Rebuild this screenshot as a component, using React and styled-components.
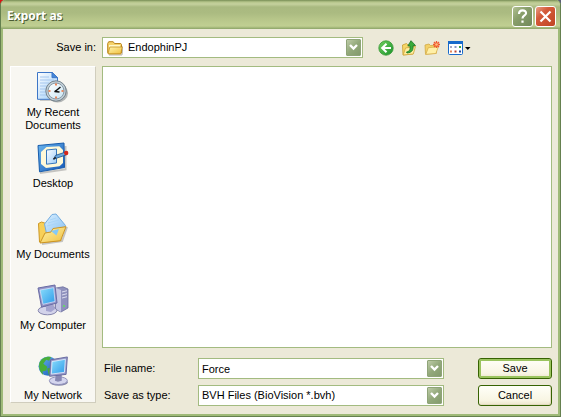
import React from "react";
import styled, { createGlobalStyle } from "styled-components";

const GlobalStyle = createGlobalStyle`
  * { box-sizing: border-box; }
  body { margin: 0; background: linear-gradient(90deg, #e01010 5px, #5c5f78 6px); }
  body, button, input, select {
    font-family: "Liberation Sans", Arial, sans-serif;
    font-size: 11px;
    line-height: 13px;
    color: #000;
  }
`;

const Window = styled.main`
  display: flex;
  flex-direction: column;
  min-height: 100vh;
  background: #ece9d8;
  border: solid #65804f;
  border-width: 0 1px 1px;
  border-radius: 5px 5px 0 0;
  box-shadow: inset 2px 0 #9fba78, inset -2px 0 #9fba78, inset 0 -2px #9fba78;
`;

const TitleBar = styled.header`
  display: flex;
  align-items: center;
  gap: 2px;
  height: 29px;
  padding: 3px 4px 0 6px;
  border-radius: 5px 5px 0 0;
  background: linear-gradient(#778d55 0, #b6c58b 2px, #c5d19e 4px, #a9b980 7px, #abbb81 13px, #b8c78b 20px, #c0cf92 26px, #8ca467 29px);
`;

const Title = styled.h1`
  flex: 1;
  margin: 0;
  font: bold 12px/16px "Noto Sans", sans-serif;
  color: #fff;
  text-shadow: 1px 1px #4b5c33;
`;

const CaptionButton = styled.button`
  display: flex;
  width: 21px;
  height: 21px;
  padding: 0;
  border: 1px solid #fff;
  border-radius: 3px;
  background: ${(p) =>
    p.$danger
      ? "linear-gradient(135deg, #e8a086, #d45a3a 35%, #c04524)"
      : "linear-gradient(135deg, #b2c193, #899f6b 40%, #71885a)"};
`;

const Body = styled.form`
  flex: 1;
  display: flex;
  flex-direction: column;
  gap: 8px;
  padding: 8px 8px 10px 9px;
`;

const LocationRow = styled.div`
  display: flex;
  align-items: center;
`;

const LocationLabel = styled.label`
  width: 86px;
  margin-right: 6px;
  text-align: right;
`;

const Combo = styled.div`
  display: flex;
  align-items: center;
  flex: ${(p) => (p.$location ? "0 1 261px" : "1")};
  min-width: 0;
  height: 21px;
  padding: 1px;
  border: 1px solid #a3bb80;
  background: #fff;
  position: relative;
`;

const FolderSlot = styled.span`
  display: flex;
  position: absolute;
  left: 4px;
  pointer-events: none;
`;

const ComboSelect = styled.select`
  appearance: none;
  flex: 1;
  min-width: 0;
  height: 17px;
  margin: 0;
  padding: 0 18px 0 ${(p) => (p.$icon ? "24px" : "2px")};
  border: 0;
  outline: 0;
  background: transparent;
`;

const ComboInput = styled.input`
  flex: 1;
  min-width: 0;
  height: 17px;
  margin: 0;
  padding: 0 18px 0 2px;
  border: 0;
  outline: 0;
  background: transparent;
`;

const ArrowFace = styled.span`
  display: flex;
  position: absolute;
  right: 1px;
  width: 15px;
  height: 17px;
  border: 1px solid #8fa478;
  border-radius: 1px;
  background: linear-gradient(135deg, #bdcba7, #93a97b 50%, #849b6d);
  pointer-events: none;
`;

const ToolBar = styled.div`
  display: flex;
  gap: 7px;
  margin-left: 15px;
`;

const ToolButton = styled.button`
  display: flex;
  padding: 0;
  border: 0;
  background: none;
`;

const Main = styled.div`
  flex: 1;
  display: flex;
  gap: 6px;
`;

const Places = styled.nav`
  width: 86px;
  margin-bottom: 3px;
  padding-top: 4px;
  border: 1px solid #fff;
  border-right-color: #d0cdbd;
  border-bottom-color: #d0cdbd;
  background: #f8f7f2;
`;

const Place = styled.button`
  display: flex;
  flex-direction: column;
  align-items: center;
  gap: 3px;
  width: 100%;
  height: 71px;
  padding: 0;
  border: 0;
  background: none;
  &:last-child { height: 47px; }
`;

const Content = styled.div`
  flex: 1;
  min-width: 0;
  display: flex;
  flex-direction: column;
  gap: 10px;
`;

const FileList = styled.div`
  flex: 1;
  border: 1px solid #a3bb80;
  background: #fff;
`;

const Fields = styled.div`
  display: flex;
  flex-direction: column;
  gap: 6px;
`;

const FieldRow = styled.div`
  display: flex;
  align-items: center;
`;

const FieldLabel = styled.label`
  width: 96px;
  padding-left: 2px;
`;

const ActionButton = styled.button`
  width: 74px;
  height: 21px;
  margin-left: 34px;
  padding: 0;
  border: 1px solid #376302;
  border-radius: 3px;
  background: linear-gradient(#fffff8, #f8f5e3 75%, #ece5cb);
  box-shadow: ${(p) => (p.$primary ? "inset 0 0 0 2px #9bc45f" : "inset -1px -1px #e3dbc0")};
`;

const Icon = ({ size = 16, children }) => (
  <svg width={size} height={size} viewBox={`0 0 ${size} ${size}`} aria-hidden="true">
    {children}
  </svg>
);

const gradients = [
  ["folderFace", "#fff5b0", "#f0bf3c"],
  ["greenBall", "#72cf5e", "#19932b"],
  ["paper", "#ffffff", "#9bccf8"],
  ["clockFace", "#ffffff", "#c9e5f3"],
  ["blueDeep", "#69b5ee", "#1557b6"],
  ["paperBlue", "#d9efff", "#82bdf2"],
  ["screen", "#8bddfb", "#2e9be9"],
];

const GradientDefs = () => (
  <defs>
    {gradients.map(([id, from, to]) => (
      <linearGradient key={id} id={id} x1="0" y1="0" x2="1" y2="1">
        <stop stopColor={from} />
        <stop offset="1" stopColor={to} />
      </linearGradient>
    ))}
  </defs>
);

const Arrow = () => (
  <ArrowFace>
    <svg width="13" height="15" viewBox="0 0 13 15" aria-hidden="true">
      <path d="M3 5l3.5 3.5L10 5" fill="none" stroke="#fff" strokeWidth="2.4" />
    </svg>
  </ArrowFace>
);

const Folder = () => (
  <Icon>
    <GradientDefs />
    <path d="M2 15h13l1-9" fill="none" stroke="#8d8774" opacity=".6" />
    <path d="M.7 3.5l1-1.8h4.5l1.3 1.8h6.3l.7 1V13l-1 .8H1.7l-1-1z" fill="#f6d36c" stroke="#b9851f" />
    <path d="M2 5h11v3H2z" fill="#fff9c8" />
    <path d="M1 13.800l1.800-6.800h12.500L13.800 13.800z" fill="url(#folderFace)" stroke="#c48f20" strokeWidth=".8" />
  </Icon>
);

const Back = () => (
  <Icon>
    <circle cx="8" cy="8" r="7.2" fill="url(#greenBall)" stroke="#359733" strokeWidth=".8" />
    <path d="M8.5 3.8L4.2 8l4.3 4.2M4.5 8H13" fill="none" stroke="#fff" strokeWidth="2.1" />
  </Icon>
);

const UpFolder = () => (
  <Icon>
    <path d="M2 15L1.5 5l4-1.5L7 5l6-.5-1 9.500z" fill="#f6d668" stroke="#c99c2e" strokeWidth=".8" />
    <path d="M2.2 15L4.5 8 14.5 6.500l-2.2 7.500z" fill="#ffee9f" stroke="#d1a63e" strokeWidth=".8" />
    <path d="M5.5 12c4-.7 3.7-3.5 3.4-6.2L6.8 6 10 .7l4.500 4.800-2.500.2c.4 4-.5 6.8-6 7.3z" fill="#39ab3b" stroke="#187426" strokeWidth=".8" />
  </Icon>
);

const NewFolder = () => (
  <Icon>
    <path d="M1.5 14.3L1 5l4-1 1.5 1.5 5.5-.3.5 8z" fill="#f3d168" stroke="#d0a842" strokeWidth=".8" />
    <path d="M1.8 14.3L4.3 7.7l10-.9-2.4 6.7z" fill="#fff0a7" stroke="#d8b04c" strokeWidth=".8" />
    <path d="M12.5 1v7M9 4.5h7M10 2l5 5M15 2l-5 5" stroke="#f0582f" strokeWidth="1.3" />
    <circle cx="12.5" cy="4.5" r="1.3" fill="#ffbe7a" />
  </Icon>
);

const Views = () => (
  <svg width="24" height="16" viewBox="0 0 24 16" aria-hidden="true">
    <rect x="1.5" y="1.5" width="14" height="13" rx="1" fill="#fff" stroke="#176acb" />
    <path d="M1 1h15v3H1z" fill="#176acb" />
    <path d="M3 6h2v2H3z" fill="#a9a9c4" />
    <path d="M7.5 6h2v2h-2z" fill="#8797c8" />
    <path d="M12 6h2v2h-2z" fill="#40a43d" />
    <path d="M3 10.5h2v2H3z" fill="#e38459" />
    <path d="M7.5 10.5h2v2h-2z" fill="#b74232" />
    <path d="M12 10.5h2v2h-2z" fill="#23459b" />
    <path d="M18 7h5.5l-2.7 3z" fill="#000" />
  </svg>
);

const RecentDocs = () => (
  <Icon size={32}>
    <path d="M3 29h20" stroke="#888" opacity=".4" strokeWidth="2" />
    <path d="M.5 1.5h14.800l5.2 5v21.8H.5z" fill="url(#paper)" stroke="#3d76c7" />
    <path d="M15 1.5v5.2h5.5z" fill="#4388dc" stroke="#3d76c7" />
    <path d="M3 6h9M3 9h14M3 12h9M3 15h7M3 18h6M3 21h6M3 24h7" stroke="#a5c6ee" />
    <ellipse cx="20.500" cy="22" rx="10.500" ry="9.4" fill="#777d82" opacity=".55" />
    <circle cx="19" cy="20" r="10.200" fill="#c3d0d8" stroke="#74828c" />
    <circle cx="19" cy="20" r="8" fill="url(#clockFace)" stroke="#899ba8" />
    <path d="M19 12.500v2M19 25.500v2M11.500 20h2M24.500 20h2" stroke="#ef6b32" strokeWidth="1.6" />
    <path d="M17.500 21l6-5M17.500 20.5l5 .5" stroke="#111" strokeWidth="1.5" />
  </Icon>
);

const Desktop = () => (
  <Icon size={32}>
    <path d="M3 31L28.500 27.500V4" fill="none" stroke="#777" strokeWidth="2" opacity=".4" />
    <path d="M1 3.500L27 1l.500 24.500L2.5 29.800z" fill="url(#blueDeep)" stroke="#175cac" />
    <path d="M9.5 5l12.8-.7L26 8v13l-3.5 3.2L9 26l-5-4V10z" fill="#fff9d8" />
    <path d="M9.5 8l10-1v14l-10 1.2z" fill="url(#paper)" stroke="#3878bc" />
    <path d="M16.5 17.2l2-3.8 9.8-3.3 1 2.8-9.5 3.2z" fill="#69a9e0" stroke="#1d4e86" strokeWidth=".8" />
    <path d="M16.5 17.3l2.2-2" stroke="#222" strokeWidth="1.5" />
    <circle cx="29.2" cy="11" r="2.200" fill="#d72819" />
  </Icon>
);

const Documents = () => (
  <Icon size={32}>
    <path d="M5 31l20-3 5-14" fill="none" stroke="#777" strokeWidth="2" opacity=".4" />
    <path d="M2.5 29L1.500 10.500l3-1.500 4.500 1.500 2 3 10-1 3 15-19 2z" fill="#f8d058" stroke="#cd9825" />
    <path d="M7.500 11L15 1.500l4-.500 9.500 11.500L22.5 24 10 23z" fill="url(#paperBlue)" stroke="#74ade0" />
    <path d="M13 7l6-2M11 10l11-3M10 13l14-3.500" stroke="#a9d5f8" />
    <path d="M3 30L8 20l6-1 2-3.5 13-1.8-5.5 14z" fill="url(#folderFace)" stroke="#cc9423" />
    <path d="M14 18l8-2-2.500 6.500z" fill="#83c9f7" />
  </Icon>
);

const Computer = () => (
  <Icon size={32}>
    <path d="M19 4l7-1.2L31 5v19l-7 4-6-3z" fill="#8f91bd" stroke="#6b6d9d" strokeWidth=".8" />
    <path d="M19 4l5 2v22l-5-3z" fill="#c4c5e2" />
    <path d="M25 8l5-1.3M25 11l5-1.3M25 14l5-1.3" stroke="#dddef0" />
    <path d="M26 22h2" stroke="#69d36f" strokeWidth="2" />
    <ellipse cx="10.5" cy="26.5" rx="9.3" ry="4.3" fill="#d3d3ea" stroke="#8585ad" />
    <path d="M9 21l7-2 2 6-4 3-5-1z" fill="#a4a4cf" />
    <path d="M1 4l17-3 2 18L4.5 23z" fill="#9293c6" stroke="#6a6ca5" />
    <path d="M3 6l13.7-2.4L18 17.5 6 20.3z" fill="url(#screen)" stroke="#e0e5fa" strokeWidth=".7" />
  </Icon>
);

const Network = () => (
  <Icon size={32}>
    <circle cx="11" cy="11.5" r="10" fill="url(#blueDeep)" />
    <path d="M2 8c2-5 8-7 12-6l-2 4-3-1-3 4 4 3-1 4-4 1 1 4C2 17 1 12 2 8M10 14l4-1 2 4-4 5z" fill="#49af38" />
    <ellipse cx="22" cy="28" rx="9.2" ry="3.8" fill="#8788aa" />
    <ellipse cx="21.5" cy="26.5" rx="9.3" ry="4" fill="#d4d5ee" stroke="#9091bb" />
    <path d="M19 20l6-.5v7l-4 1-3-1z" fill="#8687b2" />
    <path d="M13.5 5L30.8 2l-1.3 18-17 2z" fill="#9798c8" stroke="#676aa0" />
    <path d="M15 6.8L28.8 4.4l-1 13.5-13.5 1.8z" fill="url(#screen)" stroke="#eaf3ff" strokeWidth=".8" />
  </Icon>
);

const places = [
  ["My Recent Documents", RecentDocs],
  ["Desktop", Desktop],
  ["My Documents", Documents],
  ["My Computer", Computer],
  ["My Network", Network],
];

export default function App() {
  return (
    <Window>
      <GlobalStyle />
      <TitleBar>
        <Title>Export as</Title>
        <CaptionButton type="button" aria-label="Help">
          <Icon size={19}>
            <path d="M6 7c0-5 7.5-4.5 7-.5-.2 2-3.500 2-3.500 5M9.5 13.5v2.3" fill="none" stroke="#fff" strokeWidth="2.2" />
          </Icon>
        </CaptionButton>
        <CaptionButton type="button" $danger aria-label="Close">
          <Icon size={19}>
            <path d="M4.5 4.5l10 10M14.5 4.5l-10 10" stroke="#fff" strokeWidth="2.2" />
          </Icon>
        </CaptionButton>
      </TitleBar>
      <Body onSubmit={(e) => e.preventDefault()}>
        <LocationRow>
          <LocationLabel htmlFor="location">Save in:</LocationLabel>
          <Combo $location>
            <FolderSlot><Folder /></FolderSlot>
            <ComboSelect id="location" $icon>
              <option>EndophinPJ</option>
            </ComboSelect>
            <Arrow />
          </Combo>
          <ToolBar>
            <ToolButton type="button" aria-label="Back"><Back /></ToolButton>
            <ToolButton type="button" aria-label="Up one level"><UpFolder /></ToolButton>
            <ToolButton type="button" aria-label="New folder"><NewFolder /></ToolButton>
            <ToolButton type="button" aria-label="Views"><Views /></ToolButton>
          </ToolBar>
        </LocationRow>
        <Main>
          <Places aria-label="Places">
            {places.map(([name, Drawing]) => (
              <Place type="button" key={name}>
                <Drawing />
                <span>{name}</span>
              </Place>
            ))}
          </Places>
          <Content>
            <FileList role="listbox" aria-label="Files" />
            <Fields>
              <FieldRow>
                <FieldLabel htmlFor="filename">File name:</FieldLabel>
                <Combo>
                  <ComboInput id="filename" defaultValue="Force" />
                  <Arrow />
                </Combo>
                <ActionButton type="submit" $primary>Save</ActionButton>
              </FieldRow>
              <FieldRow>
                <FieldLabel htmlFor="filetype">Save as type:</FieldLabel>
                <Combo>
                  <ComboSelect id="filetype">
                    <option>BVH Files (BioVision *.bvh)</option>
                  </ComboSelect>
                  <Arrow />
                </Combo>
                <ActionButton type="button">Cancel</ActionButton>
              </FieldRow>
            </Fields>
          </Content>
        </Main>
      </Body>
    </Window>
  );
}
